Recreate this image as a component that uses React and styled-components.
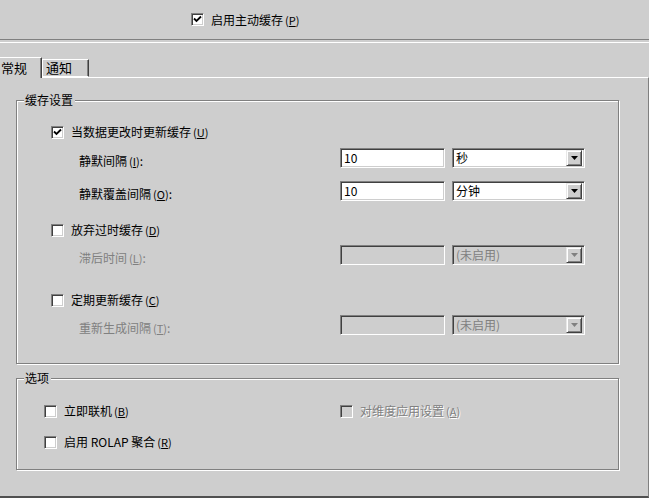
import React from "react";
import styled, { createGlobalStyle } from "styled-components";

const GlobalStyle = createGlobalStyle`
	html, body {
		margin: 0;
		padding: 0;
		background: #cecece;
		overflow: hidden;
	}
	body {
		font-family: "Noto Sans CJK SC", "Liberation Sans", sans-serif;
		font-size: 12px;
		color: #000;
	}
`;

function Check({ checked, disabled }) {
	return (
		<Box disabled={disabled}>
			{checked && (
				<svg width="9" height="9" viewBox="0 0 9 9">
					<path d="M1 3.5 L3.5 6 L8 1.5" fill="none" stroke="#000" strokeWidth="1.8" />
				</svg>
			)}
		</Box>
	);
}

function CheckItem({ checked, disabled, label, hot }) {
	return (
		<CheckRow>
			<Check checked={checked} disabled={disabled} />
			<CheckText disabled={disabled}>
				{label}
				<Hot>(<u>{hot}</u>)</Hot>
			</CheckText>
		</CheckRow>
	);
}

function Select({ value, disabled }) {
	return (
		<SelectBox disabled={disabled}>
			<span>{value}</span>
			<ArrowButton>
				<svg width="7" height="4" viewBox="0 0 7 4">
					<path d="M0 0 H7 L3.5 4 Z" fill={disabled ? "#808080" : "#000"} />
				</svg>
			</ArrowButton>
		</SelectBox>
	);
}

function FieldRow({ label, hot, value, unit, disabled, top }) {
	return (
		<Row top={top}>
			<Label disabled={disabled}>
				{label}
				<Hot>(<u>{hot}</u>)</Hot>:
			</Label>
			<TextBox disabled={disabled}>{value}</TextBox>
			<Select value={unit} disabled={disabled} />
		</Row>
	);
}

export default function App() {
	return (
		<Page>
			<GlobalStyle />
			<TopBar>
				<CheckItem checked label="启用主动缓存" hot="P" />
			</TopBar>
			<Separator />
			<TabStrip>
				<Tab active>常规</Tab>
				<Tab>通知</Tab>
			</TabStrip>
			<Panel>
				<Group height={264}>
					<Legend>缓存设置</Legend>
					<GroupBody>
						<Row top={21}>
							<CheckItem checked label="当数据更改时更新缓存" hot="U" />
						</Row>
						<FieldRow top={5} label="静默间隔" hot="I" value="10" unit="秒" />
						<FieldRow top={13} label="静默覆盖间隔" hot="O" value="10" unit="分钟" />
						<Row top={20}>
							<CheckItem label="放弃过时缓存" hot="D" />
						</Row>
						<FieldRow top={4} disabled label="滞后时间" hot="L" value="" unit="(未启用)" />
						<Row top={26}>
							<CheckItem label="定期更新缓存" hot="C" />
						</Row>
						<FieldRow top={4} disabled label="重新生成间隔" hot="T" value="" unit="(未启用)" />
					</GroupBody>
				</Group>
				<Group height={92} top={14}>
					<Legend>选项</Legend>
					<OptionGrid>
						<CheckItem label="立即联机" hot="B" />
						<CheckItem disabled label="对维度应用设置" hot="A" />
						<CheckItem label="启用 ROLAP 聚合" hot="R" />
					</OptionGrid>
				</Group>
			</Panel>
		</Page>
	);
}

const Page = styled.div`
	width: 649px;
	height: 498px;
	overflow: hidden;
	background: #cecece;
`;

const TopBar = styled.div`
	height: 39px;
	display: flex;
	align-items: center;
	padding-left: 191px;
	box-sizing: border-box;
`;

const Separator = styled.div`
	height: 4px;
	box-sizing: border-box;
	border-top: 1px solid #808080;
	border-bottom: 1px solid #ffffff;
`;

const TabStrip = styled.div`
	height: 34px;
	display: flex;
	align-items: flex-end;
	margin-left: -6px;
`;

const Tab = styled.div`
	box-sizing: border-box;
	height: ${(p) => (p.active ? "21px" : "18px")};
	width: ${(p) => (p.active ? "48px" : "47px")};
	padding-left: ${(p) => (p.active ? "6px" : "3px")};
	padding-top: ${(p) => (p.active ? "3px" : "1px")};
	line-height: 14px;
	font-size: 13px;
	border-top: 1px solid #ffffff;
	border-left: 1px solid #ffffff;
	border-right: 1px solid #404040;
	box-shadow: inset -1px 0 0 #808080;
	border-bottom: ${(p) => (p.active ? "none" : "1px solid #ffffff")};
	position: relative;
	z-index: ${(p) => (p.active ? 2 : 1)};
	margin-bottom: ${(p) => (p.active ? "-1px" : "0")};
	background: #cecece;
`;

const Panel = styled.div`
	box-sizing: border-box;
	height: 421px;
	border-top: 1px solid #ffffff;
	border-right: 1px solid #808080;
	border-bottom: 2px solid #505050;
	padding-top: 22px;
	padding-left: 16px;
`;

const Group = styled.div`
	position: relative;
	box-sizing: border-box;
	width: 603px;
	height: ${(p) => p.height}px;
	margin-top: ${(p) => p.top || 0}px;
	border: 1px solid #808080;
	box-shadow: 1px 1px 0 #ffffff, inset 1px 1px 0 #ffffff;
`;

const Legend = styled.div`
	position: absolute;
	top: -8px;
	left: 7px;
	padding: 0 2px 0 1px;
	line-height: 14px;
	background: #cecece;
`;

const GroupBody = styled.div`
	display: flex;
	flex-direction: column;
	padding-left: 34px;
`;

const Row = styled.div`
	display: grid;
	grid-template-columns: 282px 105px 133px;
	column-gap: 7px;
	height: 20px;
	align-items: center;
	margin-top: ${(p) => p.top}px;
	& > ${() => CheckRow} {
		grid-column: 1 / -1;
	}
`;

const Label = styled.div`
	align-self: start;
	padding-top: 7px;
	padding-left: 28px;
	line-height: 14px;
	white-space: nowrap;
	color: ${(p) => (p.disabled ? "#808080" : "#000")};
`;

const Hot = styled.span`
	margin-left: 2px;
	font-size: 11px;
`;

const CheckRow = styled.div`
	display: flex;
	align-items: center;
	gap: 7px;
	height: 14px;
	white-space: nowrap;
`;

const CheckText = styled.span`
	line-height: 14px;
	color: ${(p) => (p.disabled ? "#808080" : "#000")};
	text-shadow: ${(p) => (p.disabled ? "1px 1px 0 #ffffff" : "none")};
`;

const Box = styled.div`
	box-sizing: border-box;
	width: 13px;
	height: 13px;
	display: flex;
	align-items: center;
	justify-content: center;
	background: ${(p) => (p.disabled ? "#cecece" : "#ffffff")};
	border-top: 1px solid #808080;
	border-left: 1px solid #808080;
	border-right: 1px solid #ffffff;
	border-bottom: 1px solid #ffffff;
	box-shadow: inset 1px 1px 0 #404040, inset -1px -1px 0 #cecece;
`;

const sunken = `
	box-sizing: border-box;
	height: 20px;
	border-top: 1px solid #808080;
	border-left: 1px solid #808080;
	border-right: 1px solid #ffffff;
	border-bottom: 1px solid #ffffff;
	box-shadow: inset 1px 1px 0 #404040, inset -1px -1px 0 #cecece;
`;

const TextBox = styled.div`
	${sunken}
	padding: 2px 3px;
	line-height: 14px;
	background: ${(p) => (p.disabled ? "#cecece" : "#ffffff")};
`;

const SelectBox = styled.div`
	${sunken}
	display: flex;
	align-items: center;
	justify-content: space-between;
	padding: 2px 2px 2px 3px;
	line-height: 14px;
	background: ${(p) => (p.disabled ? "#cecece" : "#ffffff")};
	color: ${(p) => (p.disabled ? "#808080" : "#000")};
`;

const ArrowButton = styled.div`
	box-sizing: border-box;
	width: 16px;
	height: 16px;
	display: flex;
	align-items: center;
	justify-content: center;
	background: #cecece;
	border-top: 1px solid #e8e8e8;
	border-left: 1px solid #e8e8e8;
	border-right: 1px solid #404040;
	border-bottom: 1px solid #404040;
	box-shadow: inset 1px 1px 0 #ffffff, inset -1px -1px 0 #808080;
`;

const OptionGrid = styled.div`
	display: grid;
	grid-template-columns: 296px auto;
	row-gap: 17px;
	padding-top: 25px;
	padding-left: 27px;
`;
